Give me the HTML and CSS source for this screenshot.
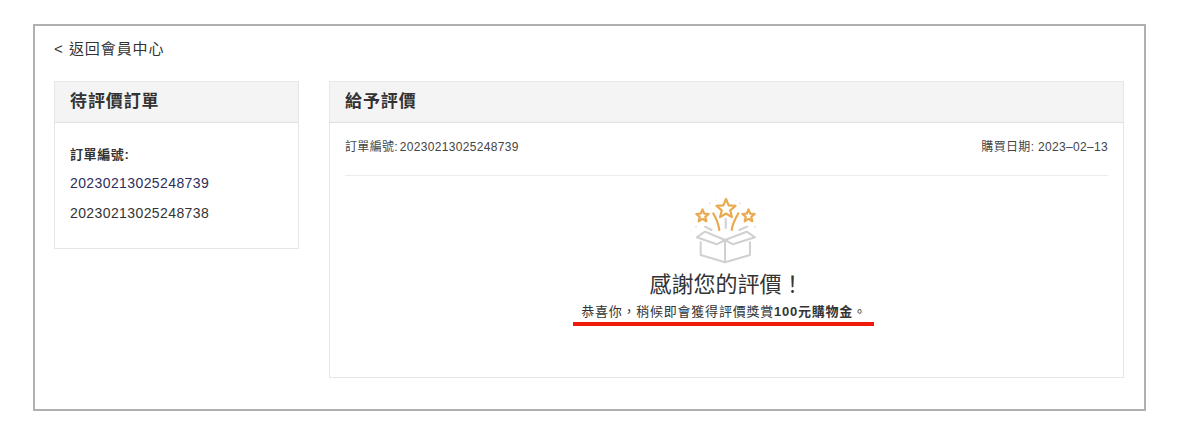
FILE: index.html
```html
<!DOCTYPE html>
<html lang="zh-Hant">
<head>
<meta charset="utf-8">
<title>給予評價</title>
<link rel="stylesheet" href="styles.css">
</head>
<body>
<div class="frame">
  <a class="back">&lt; <span class="back-text">返回會員中心</span></a>
  <div class="cols">
    <section class="panel side">
      <h2 class="panel-head">待評價訂單</h2>
      <div class="side-body">
        <div class="side-label">訂單編號:</div>
        <div class="order active">20230213025248739</div>
        <div class="order">20230213025248738</div>
      </div>
    </section>
    <section class="panel main">
      <h2 class="panel-head">給予評價</h2>
      <div class="main-body">
        <div class="meta">
          <span class="order-no">訂單編號: 20230213025248739</span>
          <span>購買日期: 2023–02–13</span>
        </div>
        <div class="thanks">
          <svg class="gift" width="62" height="67" viewBox="0 0 62 67" fill="none" stroke-linecap="round" stroke-linejoin="round">
            <g stroke="#eaa94e" stroke-width="2.200">
              <path d="M31 2l2.650 6.360 6.860.55-5.230 4.480 1.600 6.700L31 16.500l-5.880 3.590 1.600-6.700-5.230-4.480 6.860-.55z"/>
              <path d="M7.500 12.500l1.720 4.130 4.460.37-3.400 2.900 1.040 4.360-3.820-2.330-3.820 2.330 1.040-4.360-3.400-2.900 4.460-.37z"/>
              <path d="M53.500 12.500l1.720 4.130 4.460.37-3.400 2.900 1.040 4.360-3.820-2.330-3.820 2.330 1.040-4.360-3.400-2.900 4.460-.37z"/>
              <path d="M18.300 16.500c3 5 5.200 10.500 6 16.500"/>
              <path d="M43.300 16.500c-3 5-5.800 10.500-6.600 16.500"/>
            </g>
            <g stroke="#d0d0d0" stroke-width="2">
              <path d="M30.700 22v9"/>
              <path d="M10 29.700l6.700 3.300"/>
              <path d="M52.300 29.700l-8 3.300"/>
              <path d="M30 43L10 34.700 1.700 40.300l20 7z"/>
              <path d="M30 43l21.700-8.300 8.300 5.600-22 7z"/>
              <path d="M5.700 45.300V58L30 65.300 55 58V45.300"/>
              <path d="M30 43v22.300"/>
            </g>
            <g fill="#d6d6d6">
              <circle cx="15" cy="6.300" r=".8"/><circle cx="45" cy="6.300" r=".8"/>
              <circle cx="21" cy="3" r=".6"/><circle cx="41" cy="3" r=".6"/>
              <circle cx="1" cy="29.700" r=".8"/><circle cx="60" cy="29.700" r=".8"/>
            </g>
          </svg>
          <h1 class="thanks-title">感謝您的評價！</h1>
          <p class="thanks-text">恭喜你，稍候即會獲得評價獎賞<b>100元購物金</b>。</p>
        </div>
      </div>
    </section>
  </div>
  <div class="annotation"></div>
</div>
</body>
</html>
```
FILE: styles.css
```css
* { box-sizing: border-box; }
html, body { margin: 0; padding: 0; background: #fff; }
body {
  font-family: "Liberation Sans", "Noto Sans CJK TC", sans-serif;
  color: #333;
}
.frame {
  position: relative;
  width: 1113px;
  height: 387px;
  margin: 24px 0 0 33px;
  border: 2px solid #b0b0b0;
  padding: 13px 20px 0 19px;
}
.back {
  display: block;
  font-size: 15px;
  line-height: 20px;
  color: #333;
}
.back-text {
  margin-left: 2px;
  letter-spacing: 0.9px;
}
.cols {
  display: flex;
  align-items: flex-start;
  gap: 30px;
  margin-top: 22px;
}
.panel {
  border: 1px solid #e6e6e6;
  background: #fff;
}
.panel-head {
  margin: 0;
  height: 41px;
  padding: 0 15px;
  font-size: 17px;
  font-weight: 700;
  letter-spacing: 0.9px;
  line-height: 40px;
  color: #333;
  background: #f4f4f4;
  border-bottom: 1px solid #e0e0e0;
}
.side { width: 245px; height: 168px; }
.side-body { padding: 22px 15px 0; }
.side-label {
  font-size: 13px;
  font-weight: 700;
  letter-spacing: 0.6px;
  line-height: 20px;
}
.order {
  margin-top: 10px;
  font-size: 14px;
  letter-spacing: 0.4px;
  line-height: 20px;
  color: #333;
}
.side-label + .order { margin-top: 8px; }
.order.active { color: #2e2d5c; }
.main { width: 795px; height: 297px; }
.main-body { padding: 14px 15px 0; }
.meta {
  display: flex;
  justify-content: space-between;
  height: 39px;
  font-size: 12px;
  letter-spacing: 0.33px;
  line-height: 20px;
  color: #444;
  border-bottom: 1px solid #ececec;
}
.order-no { word-spacing: -2px; }
.thanks {
  display: flex;
  flex-direction: column;
  align-items: center;
}
.gift {
  margin-top: 21px;
  margin-right: 2px;
}
.thanks-title {
  margin: 6px 0 0;
  font-size: 22px;
  font-weight: 400;
  line-height: 30px;
  color: #333;
}
.thanks-text {
  margin: 2px 0 0;
  padding-right: 5px;
  font-size: 13px;
  letter-spacing: 0.76px;
  line-height: 20px;
  color: #333;
}
.annotation {
  position: absolute;
  left: 538px;
  top: 296px;
  width: 301px;
  height: 4px;
  background: #f01a0a;
}
```
